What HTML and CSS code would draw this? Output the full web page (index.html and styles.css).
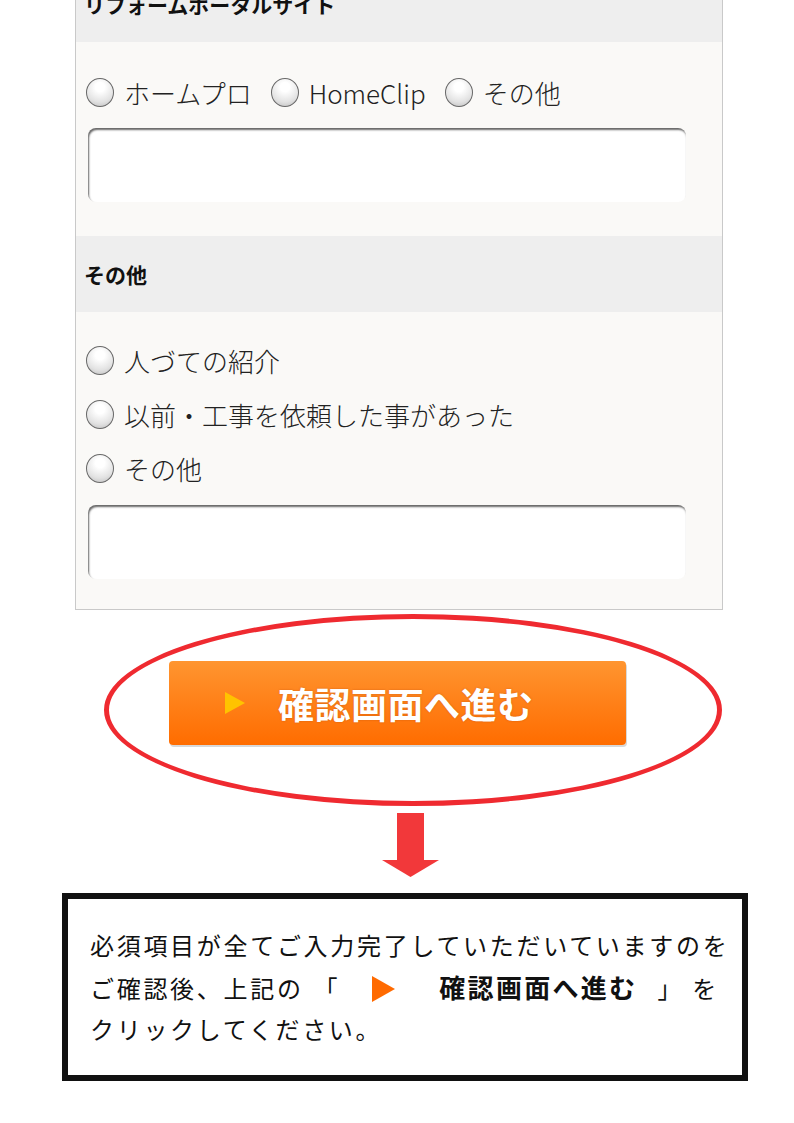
FILE: index.html
```html
<!DOCTYPE html>
<html lang="ja">
<head>
    <meta charset="utf-8">
    <title>お問い合わせフォーム</title>
    <link rel="stylesheet" href="styles.css">
</head>
<body>
    <div class="form-panel">
        <div class="section-head">リフォームポータルサイト</div>
        <div class="section-body">
            <div class="radio-row">
                <label class="radio"><input type="radio" name="portal"><span>ホームプロ</span></label>
                <label class="radio"><input type="radio" name="portal"><span>HomeClip</span></label>
                <label class="radio"><input type="radio" name="portal"><span>その他</span></label>
            </div>
            <input type="text" class="text-field">
        </div>

        <div class="section-head">その他</div>
        <div class="section-body second">
            <div class="radio-row">
                <label class="radio"><input type="radio" name="other"><span>人づての紹介</span></label>
            </div>
            <div class="radio-row">
                <label class="radio"><input type="radio" name="other"><span>以前・工事を依頼した事があった</span></label>
            </div>
            <div class="radio-row">
                <label class="radio"><input type="radio" name="other"><span>その他</span></label>
            </div>
            <input type="text" class="text-field">
        </div>
    </div>

    <!-- submit button circled in red -->
    <div class="highlight">
        <button type="button" class="btn-confirm"><span class="tri"></span>確認画面へ進む</button>
    </div>

    <div class="arrow">
        <svg width="57" height="64" viewBox="0 0 57 64">
            <rect x="15" y="0" width="27" height="48" fill="#f2383a"/>
            <polygon points="0,47 57,47 28.5,64" fill="#f2383a"/>
        </svg>
    </div>

    <div class="note-box">
        <p>必須項目が全てご入力完了していただいていますのを<br>ご確認後、上記の<span class="open">「</span><span class="mark"></span><strong>確認画面へ進む</strong><span class="close">」</span><span class="wo">を</span><br>クリックしてください。</p>
    </div>
</body>
</html>
```

FILE: styles.css
```css
body {
    margin: 0;
    background-color: #ffffff;
    font-family: "Noto Sans CJK JP", "Noto Sans", sans-serif;
    color: #222222;
}

/* form panel */
.form-panel {
    width: 646px;
    margin: -34px 0 0 75px;
    border: 1px solid #c9c9c9;
    border-top: none;
    background-color: #faf9f7;
}

.section-head {
    height: 76px;
    display: flex;
    align-items: center;
    padding: 0 8px;
    background-color: #eeeeee;
    font-size: 21px;
    font-weight: bold;
    color: #111111;
}

.section-body {
    padding: 23px 10px 34px 10px;
}

.section-body.second {
    padding: 21px 10px 30px 10px;
}

.radio-row {
    display: flex;
    align-items: center;
    height: 54px;
}

.radio {
    display: inline-flex;
    align-items: center;
    margin-right: 19px;
    font-size: 26px;
    font-weight: 300;
    color: #222222;
}

.radio input[type="radio"] {
    -webkit-appearance: none;
    appearance: none;
    width: 28px;
    height: 29px;
    margin: 0 10px 0 0;
    border: 1.5px solid #686868;
    border-radius: 50%;
    background: radial-gradient(circle at 50% 30%, #ffffff 20%, #e2e2e2 65%, #b9b9b9 100%);
    box-sizing: border-box;
}

.text-field {
    display: block;
    width: 598px;
    height: 74px;
    margin: 9px 0 0 2px;
    border: none;
    border-radius: 8px;
    background-color: #ffffff;
    box-shadow: inset 1px 2px 2px rgba(0, 0, 0, 0.6);
    box-sizing: border-box;
}

.second .text-field {
    margin-top: 10px;
}

/* red ellipse + button */
.highlight {
    width: 618px;
    height: 192px;
    margin: 4px 0 0 104px;
    border: 5px solid #ef2a30;
    border-radius: 50%;
    box-sizing: border-box;
    display: flex;
    align-items: center;
    justify-content: center;
    padding: 0 31px 14px 0;
}

.btn-confirm {
    width: 457px;
    height: 84px;
    display: flex;
    align-items: center;
    padding: 0 0 0 56px;
    border: none;
    border-radius: 4px;
    background: linear-gradient(#ff9530, #ff6c00);
    box-shadow: 1px 2px 0 #d8d8d8;
    font-family: "Noto Sans CJK JP", sans-serif;
    font-size: 36px;
    font-weight: bold;
    color: #ffffff;
    text-shadow: 0 0 2px rgba(120, 40, 0, 0.35);
    letter-spacing: 0.5px;
}

.btn-confirm .tri {
    width: 0;
    height: 0;
    border-left: 20px solid #ffc300;
    border-top: 11px solid transparent;
    border-bottom: 11px solid transparent;
    margin-right: 33px;
}

.arrow {
    margin: 7px 0 0 382px;
    height: 64px;
}

.arrow svg {
    display: block;
}

/* note */
.note-box {
    width: 686px;
    margin: 16px 0 0 62px;
    border: 6px solid #111111;
    box-sizing: border-box;
    padding: 25px 10px 25px 22px;
}

.note-box p {
    margin: 0;
    font-size: 24px;
    line-height: 41.5px;
    letter-spacing: 2.7px;
    color: #111111;
}

.note-box .open {
    margin-left: 10px;
}

.note-box .mark {
    display: inline-block;
    width: 0;
    height: 0;
    border-left: 23px solid #ff6a00;
    border-top: 13px solid transparent;
    border-bottom: 13px solid transparent;
    margin-left: 32px;
    vertical-align: -4px;
}

.note-box strong {
    margin-left: 44px;
    font-size: 26px;
    letter-spacing: 2.3px;
}

.note-box .close {
    margin-left: 20px;
}

.note-box .wo {
    margin-left: 8px;
}
```
